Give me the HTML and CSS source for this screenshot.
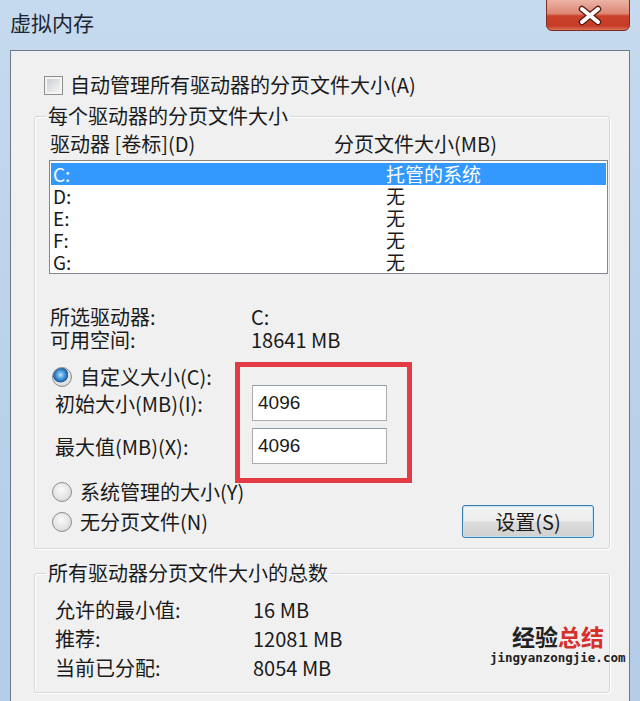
FILE: index.html
```html
<!DOCTYPE html>
<html>
<head>
  <meta charset="utf-8">
  <link rel="stylesheet" href="styles.css">
</head>
<body>
  <div class="titlebar">
    <span class="title">虚拟内存</span>
    <div class="close-btn">
      <svg width="84" height="31" viewBox="0 0 84 31">
        <defs>
          <linearGradient id="closeGrad" x1="0" y1="0" x2="0" y2="1">
            <stop offset="0" stop-color="#ecb4a6"/>
            <stop offset="0.45" stop-color="#dc8672"/>
            <stop offset="0.52" stop-color="#c9412c"/>
            <stop offset="0.85" stop-color="#c73b27"/>
            <stop offset="1" stop-color="#dc7a5e"/>
          </linearGradient>
        </defs>
        <path d="M0.5 0 V25 a5.5 5.5 0 0 0 5.5 5.5 H78 a5.5 5.5 0 0 0 5.5 -5.5 V0" fill="url(#closeGrad)" stroke="#7c2c22"/>
        <path d="M36 9 L52 22 M52 9 L36 22" stroke="#5a1a12" stroke-width="6.5" stroke-linecap="round"/>
        <path d="M36 9 L52 22 M52 9 L36 22" stroke="#ffffff" stroke-width="4" stroke-linecap="round"/>
      </svg>
    </div>
  </div>

  <div class="dialog">
    <div class="check-row"><span class="checkbox"></span>自动管理所有驱动器的分页文件大小(A)</div>

    <fieldset class="group">
      <legend>每个驱动器的分页文件大小</legend>
      <div class="list-head"><span>驱动器 [卷标](D)</span><span>分页文件大小(MB)</span></div>
      <div class="drive-list">
        <div class="drive-row selected"><span>C:</span><span>托管的系统</span></div>
        <div class="drive-row"><span>D:</span><span>无</span></div>
        <div class="drive-row"><span>E:</span><span>无</span></div>
        <div class="drive-row"><span>F:</span><span>无</span></div>
        <div class="drive-row"><span>G:</span><span>无</span></div>
      </div>

      <div class="info-row first"><span>所选驱动器:</span><span>C:</span></div>
      <div class="info-row"><span>可用空间:</span><span>18641 MB</span></div>

      <div class="radio-row custom"><span class="radio checked"></span>自定义大小(C):</div>
      <div class="input-row initial"><span>初始大小(MB)(I):</span><input class="size-input" type="text" value="4096"></div>
      <div class="input-row"><span>最大值(MB)(X):</span><input class="size-input" type="text" value="4096"></div>
      <div class="radio-row system"><span class="radio"></span>系统管理的大小(Y)</div>
      <div class="last-row">
        <div class="radio-row"><span class="radio"></span>无分页文件(N)</div>
        <button class="set-btn" type="button">设置(S)</button>
      </div>
    </fieldset>

    <fieldset class="group totals">
      <legend>所有驱动器分页文件大小的总数</legend>
      <div class="total-row first"><span>允许的最小值:</span><span>16 MB</span></div>
      <div class="total-row"><span>推荐:</span><span>12081 MB</span></div>
      <div class="total-row"><span>当前已分配:</span><span>8054 MB</span></div>
    </fieldset>
  </div>

  <!-- annotation and watermark lie over the dialog -->
  <div class="highlight-box"></div>
  <div class="watermark">
    <div class="wm-title">经验<span class="wm-red">总结</span></div>
    <div class="wm-url">jingyanzongjie.com</div>
  </div>
</body>
</html>
```

FILE: styles.css
```css
body {
  margin: 0;
  width: 640px;
  height: 701px;
  overflow: hidden;
  font-family: "Noto Sans CJK SC", "Liberation Sans", sans-serif;
  font-size: 20px;
  color: #1a1a1a;
  background: linear-gradient(180deg, #c6daef 0%, #bcd3eb 40%, #b4cce8 100%);
}

.titlebar {
  height: 50px;
  display: flex;
  justify-content: space-between;
  align-items: flex-start;
}

.title {
  margin: 9px 0 0 10px;
  font-size: 21px;
  line-height: 26px;
  color: #1c2632;
}

.close-btn {
  margin-right: 10px;
  height: 31px;
}

.close-btn svg {
  display: block;
}

.dialog {
  margin: 0 10px;
  height: 680px;
  border: 1px solid #6a7888;
  background: #f0f0f0;
  padding-top: 22px;
  box-sizing: border-box;
}

.check-row {
  display: flex;
  align-items: center;
  gap: 7px;
  height: 24px;
  line-height: 24px;
  padding-left: 33px;
}

.checkbox {
  width: 19px;
  height: 19px;
  box-sizing: border-box;
  border: 1px solid #8e8f8f;
  box-shadow: inset 0 0 0 2px #f4f4f4;
  background: linear-gradient(135deg, #c4c8cd 0%, #e6e7e9 60%, #f6f6f6 100%);
}

.group {
  margin: 7px 0 0 23px;
  width: 576px;
  box-sizing: border-box;
  padding: 0 15px 10px 14px;
  border: 1px solid #d3d8dc;
  border-radius: 3px;
  box-shadow: inset 1px 1px 0 #ffffff, 1px 1px 0 #ffffff;
}

.group legend {
  margin-left: -3px;
  padding: 0 2px;
  line-height: 24px;
}

.list-head {
  display: grid;
  grid-template-columns: 284px auto;
  margin-top: 4px;
  padding-left: 1px;
  height: 24px;
  line-height: 24px;
}

.drive-list {
  margin-top: 4px;
  margin-right: -14px;
  height: 114px;
  box-sizing: border-box;
  border: 1px solid #828790;
  padding: 2px 1px 0 1px;
  background: #ffffff;
}

.drive-row {
  display: grid;
  grid-template-columns: 333px auto;
  height: 22px;
  line-height: 22px;
  font-size: 19px;
  padding-left: 2px;
}

.drive-row.selected {
  background: #3399ff;
  color: #ffffff;
}

.info-row {
  display: grid;
  grid-template-columns: 201px auto;
  padding-left: 1px;
  height: 23px;
  line-height: 23px;
}

.info-row.first {
  margin-top: 31px;
}

.radio-row {
  display: flex;
  align-items: center;
  gap: 8px;
  padding-left: 3px;
  height: 20px;
  line-height: 20px;
}

.radio-row.custom {
  margin-top: 16px;
}

.radio-row.system {
  margin-top: 18px;
}

.radio {
  width: 20px;
  height: 20px;
  box-sizing: border-box;
  border-radius: 50%;
  border: 1px solid #8c8c8c;
  background: radial-gradient(circle at 45% 40%, #fafafa 0%, #e4e4e4 55%, #c8c8c8 100%);
}

.radio.checked {
  background:
    radial-gradient(circle at 42% 38%, #b8e4fb 0%, #3d8fd3 30%, #1d5c9e 48%, transparent 52%),
    radial-gradient(circle at 45% 40%, #fafafa 0%, #e4e4e4 55%, #c8c8c8 100%);
}

.input-row {
  display: grid;
  grid-template-columns: 203px 135px;
  align-items: center;
  height: 36px;
  margin-top: 7px;
}

.input-row.initial {
  margin-top: -2px;
}

.input-row span {
  padding-left: 6px;
}

.size-input {
  width: 135px;
  height: 36px;
  box-sizing: border-box;
  border: 1px solid #abadb3;
  border-top-color: #8e9aaa;
  padding: 0 5px;
  font-family: "Liberation Sans", sans-serif;
  font-size: 19px;
  color: #1a1a1a;
  background: #ffffff;
}

.last-row {
  display: flex;
  justify-content: space-between;
  align-items: center;
  margin-top: 3px;
  height: 33px;
}

.set-btn {
  width: 132px;
  height: 33px;
  border: 1px solid #3c7fb1;
  border-radius: 3px;
  background: linear-gradient(180deg, #f4f4f4 0%, #ececec 48%, #dcdcdc 52%, #d0d0d0 100%);
  box-shadow: inset 0 0 0 1px #bfe3f8;
  font-family: "Noto Sans CJK SC", sans-serif;
  font-size: 20px;
  color: #1a1a1a;
  padding: 0;
}

.group.totals {
  margin-top: 12px;
}

.total-row {
  display: grid;
  grid-template-columns: 198px auto;
  padding-left: 6px;
  height: 29px;
  line-height: 29px;
}

.total-row.first {
  margin-top: 10px;
}

.highlight-box {
  position: absolute;
  left: 235px;
  top: 362px;
  width: 177px;
  height: 121px;
  box-sizing: border-box;
  border: 5px solid #e23b44;
}

.watermark {
  position: absolute;
  left: 490px;
  top: 622px;
  width: 136px;
}

.wm-title {
  padding-left: 22px;
  font-size: 23px;
  font-weight: 700;
  line-height: 28px;
  color: #222222;
}

.wm-red {
  color: #d6302a;
}

.wm-url {
  font-family: "DejaVu Sans Mono", monospace;
  font-size: 12.5px;
  font-weight: 700;
  line-height: 16px;
  color: #222222;
}
```
